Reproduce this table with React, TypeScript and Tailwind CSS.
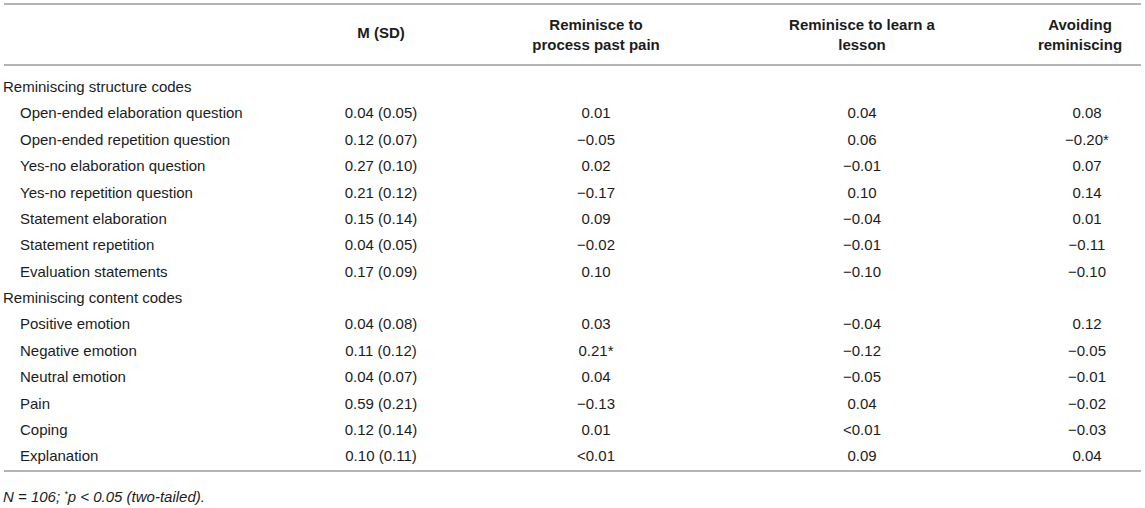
import React from 'react';

type Row = { label: string; section?: boolean; m?: string; a?: string; b?: string; c?: string };

const rows: Row[] = [
  { label: 'Reminiscing structure codes', section: true },
  { label: 'Open-ended elaboration question', m: '0.04 (0.05)', a: '0.01', b: '0.04', c: '0.08' },
  { label: 'Open-ended repetition question', m: '0.12 (0.07)', a: '−0.05', b: '0.06', c: '−0.20*' },
  { label: 'Yes-no elaboration question', m: '0.27 (0.10)', a: '0.02', b: '−0.01', c: '0.07' },
  { label: 'Yes-no repetition question', m: '0.21 (0.12)', a: '−0.17', b: '0.10', c: '0.14' },
  { label: 'Statement elaboration', m: '0.15 (0.14)', a: '0.09', b: '−0.04', c: '0.01' },
  { label: 'Statement repetition', m: '0.04 (0.05)', a: '−0.02', b: '−0.01', c: '−0.11' },
  { label: 'Evaluation statements', m: '0.17 (0.09)', a: '0.10', b: '−0.10', c: '−0.10' },
  { label: 'Reminiscing content codes', section: true },
  { label: 'Positive emotion', m: '0.04 (0.08)', a: '0.03', b: '−0.04', c: '0.12' },
  { label: 'Negative emotion', m: '0.11 (0.12)', a: '0.21*', b: '−0.12', c: '−0.05' },
  { label: 'Neutral emotion', m: '0.04 (0.07)', a: '0.04', b: '−0.05', c: '−0.01' },
  { label: 'Pain', m: '0.59 (0.21)', a: '−0.13', b: '0.04', c: '−0.02' },
  { label: 'Coping', m: '0.12 (0.14)', a: '0.01', b: '<0.01', c: '−0.03' },
  { label: 'Explanation', m: '0.10 (0.11)', a: '<0.01', b: '0.09', c: '0.04' },
];

const cols = 'grid grid-cols-[271px_212px_218px_314px_122px]';

export default function App() {
  return (
    <div className="bg-white w-[1145px] h-[508px] text-[15px] text-[#1c1c1c] font-['Liberation_Sans',Arial,sans-serif]">
      <div className="ml-[4px] w-[1137px] pt-[3px]">
        {/* Header */}
        <div className={`${cols} h-[63px] items-center border-y-2 border-[#b4b4b4] font-bold leading-[20px] text-center`}>
          <div />
          <div className="-mt-[4px]">M (SD)</div>
          <div>Reminisce to<br />process past pain</div>
          <div>Reminisce to learn a<br />lesson</div>
          <div>Avoiding<br />reminiscing</div>
        </div>

        {/* Body */}
        <div className="pt-[8px] border-b-2 border-[#b4b4b4]">
          {rows.map((r) => (
            <div key={r.label} className={`${cols} h-[26.4px] items-center text-center`}>
              <div className={`text-left whitespace-nowrap ${r.section ? '-ml-px' : 'pl-[16px]'}`}>{r.label}</div>
              <div>{r.m}</div>
              <div>{r.a}</div>
              <div>{r.b}</div>
              <div className="pl-[14px]">{r.c}</div>
            </div>
          ))}
        </div>

        {/* Footnote */}
        <p className="mt-[14px] -ml-px italic">
          N = 106; <sup className="text-[9px]">*</sup>p &lt; 0.05 (two-tailed).
        </p>
      </div>
    </div>
  );
}
